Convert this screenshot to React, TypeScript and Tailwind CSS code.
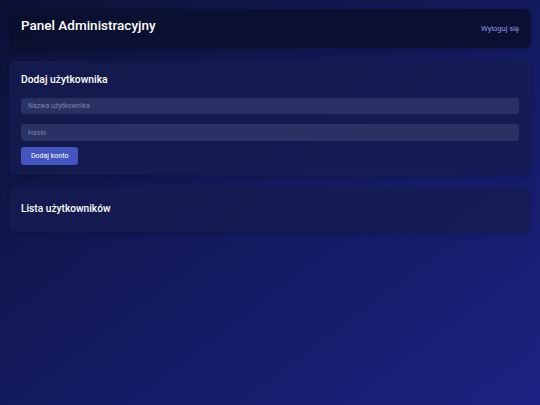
import { useState } from 'react';

export default function App() {
  const [username, setUsername] = useState('');
  const [password, setPassword] = useState('');

  return (
    <div className="min-h-[405px] w-full bg-gradient-to-br from-[#0c1234] via-[#141a5e] to-[#1c2282] p-[9px] font-['Roboto',sans-serif] text-white">
      <div className="flex flex-col gap-[13px]">
        <header className="flex h-[39px] items-center justify-between rounded-md bg-[#0a0f2e]/90 px-[12px] shadow-md">
          <h1 className="mb-[6px] text-[13.5px] font-medium leading-none">Panel Administracyjny</h1>
          <button className="text-[7.5px] text-[#8c9ce0]">Wyloguj się</button>
        </header>

        <section className="rounded-md bg-[#161c50]/80 px-[12px] pt-[12px] pb-[10px] shadow-md">
          <h2 className="mb-[11px] text-[10.3px] font-medium leading-[14px]">Dodaj użytkownika</h2>
          <input
            type="text"
            value={username}
            onChange={(e) => setUsername(e.target.value)}
            placeholder="Nazwa użytkownika"
            className="mb-[10px] block h-[16px] w-full rounded-[3px] bg-[#2a3265] px-[7px] text-[7px] text-white placeholder-[#7a82ad] outline-none"
          />
          <input
            type="password"
            value={password}
            onChange={(e) => setPassword(e.target.value)}
            placeholder="Hasło"
            className="mb-[6px] block h-[17px] w-full rounded-[3px] bg-[#2a3265] px-[7px] text-[7px] text-white placeholder-[#7a82ad] outline-none"
          />
          <button className="block h-[18px] rounded-[3px] bg-[#4454c0] px-[10px] text-[7px] text-white">
            Dodaj konto
          </button>
        </section>

        <section className="flex h-[44px] items-center rounded-md bg-[#161c50]/80 px-[12px] shadow-md">
          <h2 className="mb-[2px] text-[10.2px] font-medium">Lista użytkowników</h2>
        </section>
      </div>
    </div>
  );
}
